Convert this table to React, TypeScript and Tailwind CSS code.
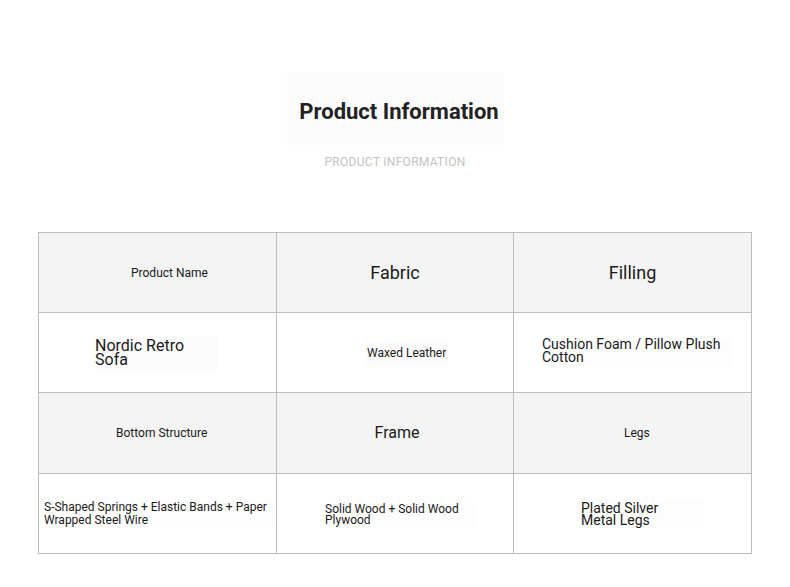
import React from "react";

type Cell = {
  lines: string[];
  className: string;
  textClass: string;
};

const rows: { header: boolean; cells: Cell[] }[] = [
  {
    header: true,
    cells: [
      { lines: ["Product Name"], className: "pl-[92px]", textClass: "text-[12px]" },
      { lines: ["Fabric"], className: "justify-center", textClass: "text-[18px]" },
      { lines: ["Filling"], className: "justify-center", textClass: "text-[18px]" },
    ],
  },
  {
    header: false,
    cells: [
      {
        lines: ["Nordic Retro", "Sofa"],
        className: "pl-[54px]",
        textClass: "text-[16px] leading-[14px] bg-[#fcfcfc] py-[3px] pl-[2px] w-[125px]",
      },
      {
        lines: ["Waxed Leather"],
        className: "pl-[88px]",
        textClass: "text-[12px] bg-[#fcfcfc] px-[2px] py-[4px]",
      },
      {
        lines: ["Cushion Foam / Pillow Plush", "Cotton"],
        className: "pl-[28px]",
        textClass: "text-[14px] leading-[13px] bg-[#fdfdfd] w-[190px] pb-[3px]",
      },
    ],
  },
  {
    header: true,
    cells: [
      { lines: ["Bottom Structure"], className: "pl-[77px]", textClass: "text-[12px]" },
      { lines: ["Frame"], className: "justify-center pl-[4px]", textClass: "text-[16px]" },
      { lines: ["Legs"], className: "pl-[110px]", textClass: "text-[12px]" },
    ],
  },
  {
    header: false,
    cells: [
      {
        lines: ["S-Shaped Springs + Elastic Bands + Paper", "Wrapped Steel Wire"],
        className: "pl-[5px]",
        textClass: "text-[12px] leading-[13px] bg-[#fdfdfd] w-[232px]",
      },
      {
        lines: ["Solid Wood + Solid Wood", "Plywood"],
        className: "pl-[48px]",
        textClass: "text-[12px] leading-[11px] bg-[#fdfdfd] w-[150px] pt-[2px]",
      },
      {
        lines: ["Plated Silver", "Metal Legs"],
        className: "pl-[67px]",
        textClass: "text-[14px] leading-[12px] bg-[#fdfdfd] w-[124px] py-[2px]",
      },
    ],
  },
];

export default function App() {
  return (
    <main
      className="w-[790px] h-[587px] bg-white text-[#1c1c1c] overflow-hidden"
      style={{ fontFamily: "Roboto, 'Liberation Sans', sans-serif" }}
    >
      {/* Heading */}
      <section className="pt-[72px] flex flex-col items-center">
        <div className="w-[217px] h-[73px] bg-[#fcfcfc] flex justify-center pt-[27px]">
          <h1 className="ml-[8px] text-[22px] font-bold text-[#222] leading-[26px]">
            Product Information
          </h1>
        </div>
        <p className="mt-[9px] text-[12px] leading-[16px] tracking-[0.3px] text-[#c2c2c2] uppercase">
          Product Information
        </p>
      </section>

      {/* Spec table */}
      <section className="mt-[62px] w-[714px] mx-auto border-l border-t border-[#bdbdbd]">
        {rows.map((row, ri) => (
          <div
            key={ri}
            className={`grid grid-cols-[238px_237px_238px] ${
              ri === 2 ? "h-[81px]" : "h-[80px]"
            } ${row.header ? "bg-[#f4f4f4]" : "bg-white"}`}
          >
            {row.cells.map((cell, ci) => (
              <div
                key={ci}
                className={`flex items-center border-r border-b border-[#bdbdbd] ${cell.className}`}
              >
                <div className={`text-[#1a1a1a] ${cell.textClass}`}>
                  {cell.lines.map((l, li) => (
                    <div key={li}>{l}</div>
                  ))}
                </div>
              </div>
            ))}
          </div>
        ))}
      </section>
    </main>
  );
}
